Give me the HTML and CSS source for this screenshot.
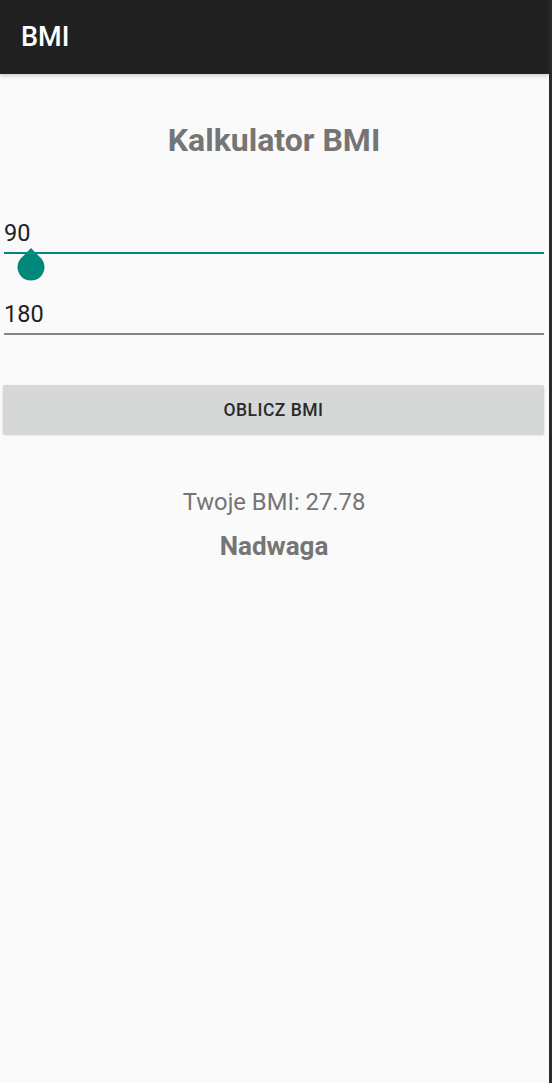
FILE: index.html
```html
<!DOCTYPE html>
<html lang="pl">
<head>
<meta charset="utf-8">
<title>BMI</title>
<link rel="stylesheet" href="styles.css">
</head>
<body>
<div class="screen">
  <div class="app">
    <header class="appbar"><span class="appbar-title">BMI</span></header>
    <main class="content">
      <h1 class="title">Kalkulator BMI</h1>
      <div class="field field-active">
        <span class="field-value">90</span>
        <svg class="handle" width="28" height="34" viewBox="0 0 28 34" aria-hidden="true">
          <path d="M14 0 L22 8.2 A13.5 13.5 0 1 1 6 8.2 Z" fill="#00897b"/>
        </svg>
      </div>
      <div class="field">
        <span class="field-value">180</span>
      </div>
      <button class="btn" type="button">OBLICZ BMI</button>
      <p class="result">Twoje BMI: 27.78</p>
      <p class="category">Nadwaga</p>
    </main>
  </div>
  <div class="edge"></div>
</div>
</body>
</html>
```
FILE: styles.css
```css
html, body {
  margin: 0;
  padding: 0;
  height: 100%;
}
body {
  font-family: Roboto, "Noto Sans", "Liberation Sans", sans-serif;
  background: #fafafa;
}
.screen {
  display: flex;
  height: 1083px;
  width: 552px;
  overflow: hidden;
}
.app {
  flex: 1;
  display: flex;
  flex-direction: column;
  background: #fafafa;
}
.edge {
  width: 3px;
  background: #2b2b2e;
}
.appbar {
  height: 74px;
  background: #212121;
  display: flex;
  align-items: center;
  padding-left: 21px;
  box-shadow: 0 2px 4px rgba(0,0,0,0.18);
  position: relative;
  z-index: 1;
}
.appbar-title {
  color: #ffffff;
  font-size: 27px;
  font-weight: 500;
}
.content {
  display: flex;
  flex-direction: column;
  padding: 0 5px 0 4px;
}
.title {
  margin: 42px 0 0;
  text-align: center;
  font-size: 32px;
  line-height: 48px;
  font-weight: 700;
  color: #757575;
}
.field {
  position: relative;
  display: flex;
  align-items: flex-end;
  height: 38px;
  border-bottom: 2px solid #858585;
  margin-top: 42px;
}
.field.field-active {
  border-bottom-color: #00897b;
  margin-top: 50px;
}
.field + .field {
  margin-top: 41px;
}
.field-value {
  font-size: 23.5px;
  line-height: 30px;
  color: #212121;
  padding-bottom: 4px;
}
.handle {
  position: absolute;
  left: 13px;
  top: 34px;
}
.btn {
  margin: 50px 0 0 -1px;
  height: 49px;
  width: 541px;
  border: none;
  border-radius: 2px;
  background: #d6d7d7;
  box-shadow: 0 1px 2px rgba(0,0,0,0.2);
  font-family: inherit;
  font-size: 17.5px;
  font-weight: 500;
  color: #2a2a2a;
  letter-spacing: 0.5px;
  padding: 0;
}
.result {
  margin: 51px 0 0;
  text-align: center;
  font-size: 23.8px;
  line-height: 34px;
  color: #757575;
}
.category {
  margin: 10px 0 0;
  text-align: center;
  font-size: 26px;
  line-height: 34px;
  font-weight: 700;
  color: #757575;
}
```
